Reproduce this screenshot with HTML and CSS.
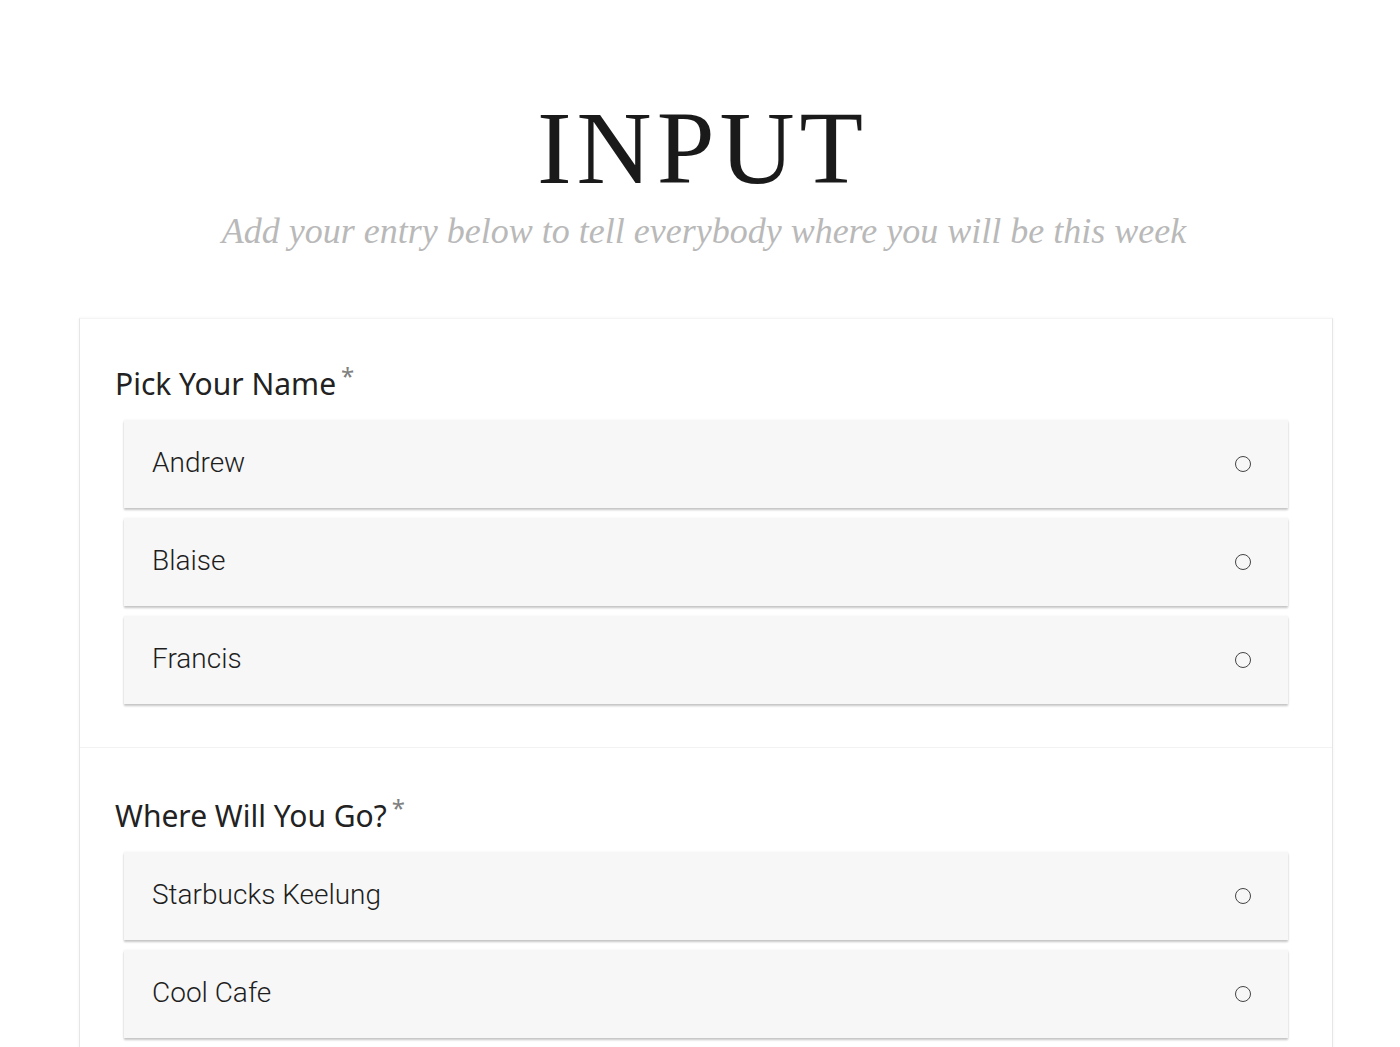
FILE: index.html
```html
<!DOCTYPE html>
<html>
<head>
<meta charset="utf-8">
<link rel="stylesheet" href="styles.css">
</head>
<body>
<header class="hero">
  <h1 class="title">INPUT</h1>
  <p class="subtitle">Add your entry below to tell everybody where you will be this week</p>
</header>
<main class="card">
  <section class="question">
    <h2 class="label">Pick Your Name<span class="req">*</span></h2>
    <div class="options">
      <div class="option"><span class="opt-text">Andrew</span><span class="radio"></span></div>
      <div class="option"><span class="opt-text">Blaise</span><span class="radio"></span></div>
      <div class="option"><span class="opt-text">Francis</span><span class="radio"></span></div>
    </div>
  </section>
  <section class="question">
    <h2 class="label">Where Will You Go?<span class="req">*</span></h2>
    <div class="options">
      <div class="option"><span class="opt-text">Starbucks Keelung</span><span class="radio"></span></div>
      <div class="option"><span class="opt-text">Cool Cafe</span><span class="radio"></span></div>
      <div class="option"><span class="opt-text">Other</span><span class="radio"></span></div>
    </div>
  </section>
</main>
</body>
</html>
```
FILE: styles.css
```css
html, body {
  margin: 0;
  padding: 0;
  background: #fff;
  overflow: hidden;
}
body {
  height: 1047px;
}
.hero {
  text-align: center;
  padding-top: 94px;
}
.title {
  margin: 0;
  font-family: "Liberation Serif", serif;
  font-weight: 400;
  font-size: 104px;
  line-height: 108px;
  color: #1a1a1a;
  letter-spacing: 5px;
  padding-left: 5px;
}
.subtitle {
  margin: 0;
  font-family: "Liberation Serif", serif;
  font-style: italic;
  font-size: 36px;
  line-height: 50px;
  color: #b9b9b9;
  position: relative;
  top: 4px;
  left: 4px;
}
.card {
  margin: 66px 67px 0 79px;
  border-left: 1px solid #e6e6e6;
  border-right: 1px solid #e6e6e6;
  border-top: 1px solid #f4f4f4;
  box-shadow: 0 0 3px rgba(0,0,0,0.05);
}
.question {
  padding: 37px 44px 43px 35px;
  border-bottom: 1px solid #f2f2f2;
}
.question + .question {
  padding-top: 40px;
}
.label {
  margin: 0 0 16px 0;
  font-family: "Noto Sans", sans-serif;
  font-weight: 400;
  font-size: 30px;
  line-height: 40px;
  color: #222;
}
.req {
  font-size: 24px;
  color: #808080;
  vertical-align: 10px;
  margin-left: 5px;
}
.options {
  display: flex;
  flex-direction: column;
  gap: 10px;
  padding-left: 9px;
}
.option {
  height: 88px;
  background: #f7f7f7;
  box-shadow: 0 2px 2px rgba(0,0,0,0.22), 0 0 2px rgba(0,0,0,0.06);
  display: flex;
  align-items: center;
  justify-content: space-between;
  padding: 0 37px 0 28px;
}
.opt-text {
  font-family: Roboto, sans-serif;
  font-weight: 300;
  font-size: 28px;
  color: #1e1e1e;
  position: relative;
  top: -2px;
}
.radio {
  width: 14px;
  height: 14px;
  border: 1.6px solid #444;
  border-radius: 50%;
}
```
